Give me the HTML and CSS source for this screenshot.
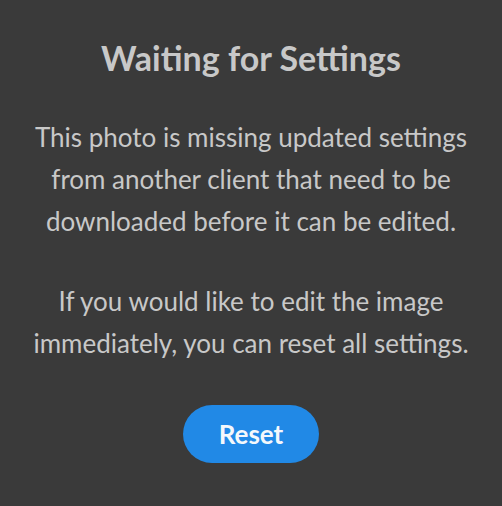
FILE: index.html
```html
<!DOCTYPE html>
<html>
<head>
<meta charset="utf-8">
<link rel="stylesheet" href="styles.css">
</head>
<body>
<div class="panel">
  <h1 class="title">Waiting for Settings</h1>
  <p class="text">This photo is missing updated settings<br>from another client that need to be<br>downloaded before it can be edited.</p>
  <p class="text">If you would like to edit the image<br>immediately, you can reset all settings.</p>
  <button class="reset">Reset</button>
</div>
</body>
</html>
```
FILE: styles.css
```css
html, body {
  margin: 0;
  padding: 0;
  background: #3a3a3a;
}
.panel {
  width: 502px;
  height: 506px;
  box-sizing: border-box;
  display: flex;
  flex-direction: column;
  align-items: center;
  padding-top: 38px;
  font-family: Lato, "Open Sans", sans-serif;
  color: #c8c8c8;
  text-align: center;
}
.title {
  margin: 0;
  font-size: 34px;
  font-weight: 700;
  line-height: 40px;
  color: #c8c8c8;
}
.text {
  margin: 0;
  font-size: 26px;
  line-height: 42px;
  white-space: nowrap;
}
.title + .text {
  margin-top: 38px;
}
.text + .text {
  margin-top: 38px;
}
.reset {
  margin-top: 41px;
  width: 136px;
  height: 58px;
  border: none;
  border-radius: 29px;
  background: #2189e6;
  color: #f4f8fc;
  font-family: Lato, "Open Sans", sans-serif;
  font-weight: 700;
  font-size: 26px;
  padding: 0;
}
```
